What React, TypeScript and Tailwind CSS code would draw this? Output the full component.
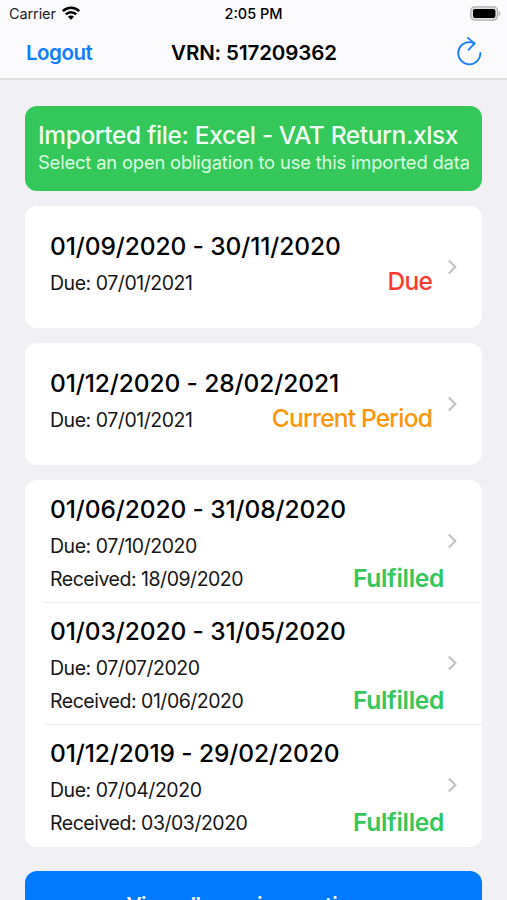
type Status = 'Due' | 'Current Period' | 'Fulfilled';

interface Obligation {
  period: string;
  due: string;
  received?: string;
  status: Status;
}

const openObligations: Obligation[] = [
  { period: '01/09/2020 - 30/11/2020', due: '07/01/2021', status: 'Due' },
  { period: '01/12/2020 - 28/02/2021', due: '07/01/2021', status: 'Current Period' },
];

const fulfilledObligations: Obligation[] = [
  { period: '01/06/2020 - 31/08/2020', due: '07/10/2020', received: '18/09/2020', status: 'Fulfilled' },
  { period: '01/03/2020 - 31/05/2020', due: '07/07/2020', received: '01/06/2020', status: 'Fulfilled' },
  { period: '01/12/2019 - 29/02/2020', due: '07/04/2020', received: '03/03/2020', status: 'Fulfilled' },
];

const statusStyles: Record<Status, string> = {
  Due: 'text-[#fb3b30] font-medium tracking-[-0.8px] mr-[12px] mb-[6px]',
  'Current Period': 'text-[#ff9508] font-medium tracking-[-0.8px] mr-[12px] mb-[6px]',
  Fulfilled: 'text-[#34c759] font-semibold tracking-[-0.3px] mb-[5px]',
};

function Chevron() {
  return (
    <svg className="h-[16px] w-[10px]" viewBox="0 0 10 16" fill="none" stroke="#c2c2c5" strokeWidth="2.1">
      <path d="M.8 1.5 7.4 8 .8 14.5" />
    </svg>
  );
}

function Row({ item }: { item: Obligation }) {
  return (
    <div className={`flex h-[122px] pl-[25px] ${item.received ? 'pt-[14px]' : 'pt-[25px]'}`}>
      <div className="w-[394px]">
        <div className="h-[30px] whitespace-nowrap text-[24.5px] font-medium leading-[30px] tracking-[-0.1px] text-black">
          {item.period}
        </div>
        <div className="mt-[9px] flex h-[28px] items-center justify-between text-[19.5px] tracking-[-0.46px] text-[#161616]">
          <span className="whitespace-nowrap">Due: {item.due}</span>
          {!item.received && (
            <span className={`whitespace-nowrap text-[24.5px] leading-[28px] ${statusStyles[item.status]}`}>{item.status}</span>
          )}
        </div>
        {item.received && (
          <div className="mt-[5px] flex h-[28px] items-center justify-between text-[19.5px] tracking-[-0.48px] text-[#161616]">
            <span className="whitespace-nowrap">Received: {item.received}</span>
            <span className={`whitespace-nowrap text-[24.5px] leading-[28px] ${statusStyles[item.status]}`}>{item.status}</span>
          </div>
        )}
      </div>
      <div className={`ml-[4px] ${item.received ? 'pt-[39px]' : 'pt-[28px]'}`}>
        <Chevron />
      </div>
    </div>
  );
}

function StatusBar() {
  return (
    <div className="grid h-[28px] grid-cols-3 items-center px-[9px] text-[14.5px] text-[#1c1c1c]">
      <div className="flex items-center gap-[6px]">
        <span className="tracking-[-0.1px]">Carrier</span>
        <svg className="mb-[2px] h-[14px] w-[18px]" viewBox="0 0 18 14" fill="none" stroke="#000" strokeWidth="2.6">
          <path d="M.8 5.2a11.6 11.6 0 0 1 16.4 0" />
          <path d="M3.8 8.4a7.4 7.4 0 0 1 10.4 0" />
          <path d="M9 13.8 5.9 10.7a4.4 4.4 0 0 1 6.2 0Z" fill="#000" stroke="none" />
        </svg>
      </div>
      <div className="text-center font-medium text-black">2:05 PM</div>
      <svg className="mb-[2px] mr-[-3px] h-[15px] w-[31px] justify-self-end" viewBox="0 0 31 15">
        <rect x=".8" y=".8" width="26.8" height="13.4" rx="4" fill="#e0e0e0" stroke="#b0b0b2" strokeWidth="1.2" />
        <rect x="3" y="3" width="22.4" height="9" rx="2" fill="#000" />
        <path d="M28.8 5v5c2-.7 2-4.3 0-5Z" fill="#b0b0b2" />
      </svg>
    </div>
  );
}

export default function App() {
  return (
    <div className="h-[900px] w-[507px] overflow-hidden bg-[#f0f0f5] font-['Inter',sans-serif]">
      <header className="h-[80px] border-b-2 border-[#dfdfe1] bg-[#fbfbfd]">
        <StatusBar />
        <div className="grid h-[50px] grid-cols-[1fr_auto_1fr] items-center px-[25px] text-[20.5px]">
          <button className="ml-[1px] justify-self-start font-semibold tracking-[-0.5px] text-[#107df8]">Logout</button>
          <h1 className="ml-[1px] font-semibold tracking-[-0.1px] text-black">VRN: 517209362</h1>
          <svg className="h-[32px] w-[25px] justify-self-end" viewBox="0 0 25 32" fill="none" stroke="#147efb" strokeWidth="1.8" strokeLinecap="round" strokeLinejoin="round">
            <path d="M23.4 15.8A11.1 11.1 0 1 1 12.3 5.1Q15 5.1 17.6 6.4" />
            <path d="M10.8 .9 17.6 6.4 11.5 12.8" />
          </svg>
        </div>
      </header>
      <main className="flex flex-col gap-[15px] px-[25px] pt-[26px]">
        <section className="h-[85px] rounded-[12px] bg-[#34c759] pl-[13px] pt-[13px] text-[#f0fff3]">
          <div className="h-[31px] whitespace-nowrap text-[24.5px] font-medium leading-[32px] tracking-[-0.38px]">Imported file: Excel - VAT Return.xlsx</div>
          <div className="h-[24px] whitespace-nowrap text-[18.4px] leading-[25px] tracking-[-0.18px] text-[#daffe1]">Select an open obligation to use this imported data</div>
        </section>
        {openObligations.map((item) => (
          <section key={item.period} className="h-[122px] rounded-[12px] bg-white">
            <Row item={item} />
          </section>
        ))}
        <section className="h-[367px] rounded-[12px] bg-white">
          {fulfilledObligations.map((item, i) => (
            <div key={item.period}>
              {i > 0 && <div className="mb-[-1px] ml-[19px] h-[1px] bg-[#ececef]" />}
              <Row item={item} />
            </div>
          ))}
        </section>
        <button className="mt-[9px] h-[70px] rounded-[12px] bg-[#007aff] pr-[6px] text-[20.8px] font-semibold text-white">
          <span className="tracking-[-0.5px]">View all </span>premium options
        </button>
      </main>
    </div>
  );
}
